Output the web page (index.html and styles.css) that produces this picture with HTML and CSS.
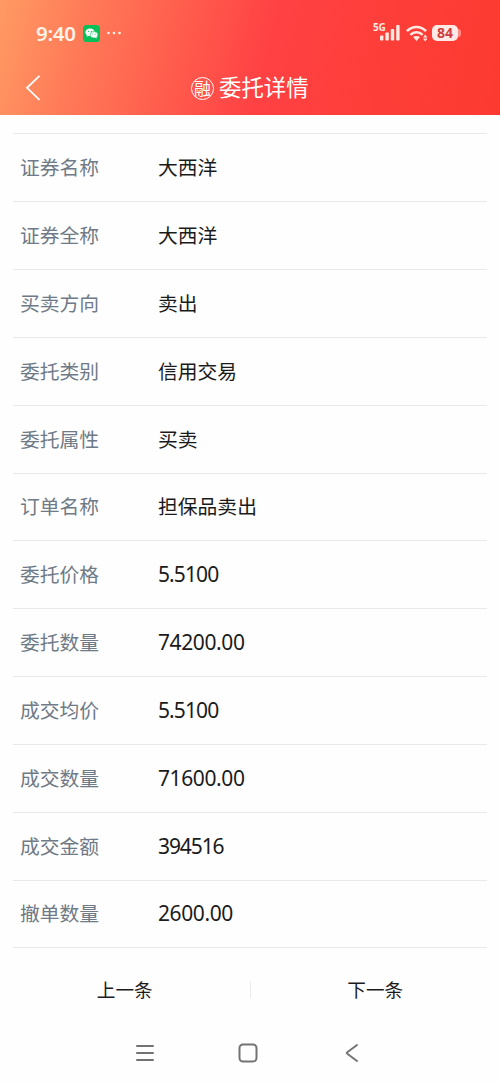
FILE: index.html
```html
<!DOCTYPE html>
<html lang="zh-CN">
<head>
    <meta charset="UTF-8">
    <meta name="viewport" content="width=device-width, initial-scale=1.0">
    <title>委托详情</title>
    <link rel="stylesheet" href="styles.css">
</head>
<body>
    <header class="header">
        <div class="status-bar">
            <div class="status-left">
                <span class="clock">9:40</span>
                <svg class="wechat-icon" viewBox="0 0 17 17">
                    <rect width="17" height="17" rx="3.5" fill="#07c05a"/>
                    <ellipse cx="7" cy="7.2" rx="4.6" ry="3.8" fill="#fff"/>
                    <path d="M4 9.5l-.5 2.2 2.5-1.2z" fill="#fff"/>
                    <ellipse cx="11" cy="9.8" rx="3.9" ry="3.3" fill="#fff" stroke="#07c05a" stroke-width=".6"/>
                    <path d="M12 12.5l1.7 1-.3-2z" fill="#fff"/>
                    <g fill="#07c05a">
                        <circle cx="5.6" cy="6.3" r=".6"/>
                        <circle cx="8.4" cy="6.3" r=".6"/>
                        <circle cx="9.8" cy="9" r=".5"/>
                        <circle cx="12.1" cy="9" r=".5"/>
                    </g>
                </svg>
                <svg class="more-icon" viewBox="0 0 14 4" fill="#fff3e8">
                    <circle cx="1.5" cy="2" r="1.3"/>
                    <circle cx="7" cy="2" r="1.3"/>
                    <circle cx="12.5" cy="2" r="1.3"/>
                </svg>
            </div>
            <div class="status-right">
                <div class="signal">
                    <span class="network">5G</span>
                    <svg class="bars-icon" viewBox="0 0 20 16" fill="#ffe9e2">
                        <rect x="0" y="10.5" width="3.4" height="5" rx=".8"/>
                        <rect x="5.4" y="7.5" width="3.4" height="8" rx=".8"/>
                        <rect x="10.8" y="4" width="3.4" height="11.5" rx=".8"/>
                        <rect x="16.2" y="0" width="3.4" height="15.5" rx=".8"/>
                    </svg>
                </div>
                <svg class="wifi-icon" viewBox="0 0 22 17" fill="none" stroke="#ffe9e2" stroke-width="2.5">
                    <path d="M.9 6.2C6.2.5 14.8.5 20.1 6.2"/>
                    <path d="M4.4 9.9c3.4-3.6 8.8-3.6 12.2 0"/>
                    <path d="M7 12.1c2.1-1.6 4.9-1.6 7 0l-3.5 3.8z" fill="#ffe9e2" stroke="none"/>
                    <path d="M17 12.6l2.2-3 2.2 3zM17 13.5h4.4l-2.2 3z" fill="#ffe9e2" stroke="none"/>
                </svg>
                <div class="battery">84</div>
            </div>
        </div>
        <div class="title-bar">
            <svg class="back-icon" viewBox="0 0 16 26" fill="none" stroke="#fff" stroke-width="1.8">
                <path d="M14.5 .8L2 12.8l12.5 12"/>
            </svg>
            <span class="badge">融</span>
            <h1 class="title">委托详情</h1>
        </div>
    </header>

    <main class="detail-list">
        <div class="row"><span class="label">证券名称</span><span class="value">大西洋</span></div>
        <div class="row"><span class="label">证券全称</span><span class="value">大西洋</span></div>
        <div class="row"><span class="label">买卖方向</span><span class="value">卖出</span></div>
        <div class="row"><span class="label">委托类别</span><span class="value">信用交易</span></div>
        <div class="row"><span class="label">委托属性</span><span class="value">买卖</span></div>
        <div class="row"><span class="label">订单名称</span><span class="value">担保品卖出</span></div>
        <div class="row"><span class="label">委托价格</span><span class="value number price">5.5100</span></div>
        <div class="row"><span class="label">委托数量</span><span class="value number">74200.00</span></div>
        <div class="row"><span class="label">成交均价</span><span class="value number price">5.5100</span></div>
        <div class="row"><span class="label">成交数量</span><span class="value number">71600.00</span></div>
        <div class="row"><span class="label">成交金额</span><span class="value number amount">394516</span></div>
        <div class="row"><span class="label">撤单数量</span><span class="value number">2600.00</span></div>
    </main>

    <div class="pager">
        <a class="pager-link">上一条</a>
        <a class="pager-link">下一条</a>
    </div>

    <nav class="system-nav">
        <svg class="nav-icon" viewBox="0 0 20 20" fill="none" stroke="#737373" stroke-width="2" stroke-linecap="round">
            <path d="M2 3h16M2 10h16M2 17h16"/>
        </svg>
        <svg class="nav-icon" viewBox="0 0 20 20" fill="none" stroke="#737373" stroke-width="2">
            <rect x="1.5" y="1.5" width="17" height="17" rx="3.5"/>
        </svg>
        <svg class="nav-icon" viewBox="0 0 20 20" fill="none" stroke="#737373" stroke-width="2" stroke-linecap="round" stroke-linejoin="round">
            <path d="M16 2L6.3 9.2q-1 .8 0 1.6L16 18"/>
        </svg>
    </nav>
</body>
</html>
```

FILE: styles.css
```css
* {
    box-sizing: border-box;
}
body {
    margin: 0;
    height: 1083px;
    background: #fefefe;
    color: #1b1b1b;
    font-family: "Noto Sans CJK SC", sans-serif;
    overflow: hidden;
}
.header {
    height: 115px;
    color: #fff;
    background: linear-gradient(104deg, #ff9a63 0%, #ff7a58 17%, #ff5c4d 36%, #ff4144 53%, #fd3e38 76%, #fc3a31 100%);
}
.status-bar {
    display: flex;
    justify-content: space-between;
    height: 60px;
    padding: 6px 39px 0 36px;
}
.status-left,
.status-right {
    display: flex;
    align-items: center;
}
.clock {
    width: 47px;
    font-family: "Noto Sans", sans-serif;
    font-size: 20.5px;
    font-weight: 600;
    letter-spacing: -0.3px;
    color: #fff3e8;
}
.wechat-icon {
    width: 17px;
    height: 17px;
}
.more-icon {
    width: 14px;
    height: 4px;
    margin-left: 7px;
}
.signal {
    position: relative;
    height: 16px;
    margin-right: 6px;
}
.network {
    position: absolute;
    left: -7px;
    top: -3px;
    font: 700 10px/11px "Noto Sans", sans-serif;
    letter-spacing: -0.3px;
    color: #ffe9e2;
}
.bars-icon {
    display: block;
    width: 20px;
    height: 16px;
}
.wifi-icon {
    width: 22px;
    height: 17px;
    margin-right: 4px;
}
.battery {
    position: relative;
    width: 26px;
    height: 16px;
    margin-right: 3px;
    border-radius: 5px;
    background: #ffe9e6;
    color: #cf3d3c;
    font: 700 14px/16px "Noto Sans", sans-serif;
    text-align: center;
}
.battery::after {
    content: "";
    position: absolute;
    left: 26px;
    top: 4px;
    width: 3px;
    height: 8px;
    border-radius: 0 4px 4px 0;
    background: #ff8c85;
}
.title-bar {
    display: flex;
    align-items: center;
    height: 55px;
    padding-left: 25px;
}
.back-icon {
    width: 16px;
    height: 26px;
}
.badge {
    width: 23px;
    height: 23px;
    margin: 1px 0 0 150px;
    border: 1px solid #fff;
    border-radius: 50%;
    font-size: 17px;
    line-height: 19px;
    text-align: center;
    white-space: nowrap;
}
.title {
    margin: 0 0 0 5px;
    padding-bottom: 3px;
    font-size: 22.4px;
    line-height: 32px;
    font-weight: 400;
}
.detail-list {
    margin: 18.4px 13px 0;
    border-top: 1px solid #e9e9e9;
}
.row {
    display: flex;
    align-items: center;
    height: 67.83px;
    padding: 0 0 2px 7px;
    border-bottom: 1px solid #e9e9e9;
    font-size: 19.8px;
}
.label {
    width: 138px;
    color: #6f7a86;
}
.number {
    padding-top: 1px;
    font-family: "Noto Sans", sans-serif;
    font-size: 21px;
    letter-spacing: -0.4px;
}
.price {
    letter-spacing: -0.9px;
}
.amount {
    letter-spacing: -1.1px;
}
.pager {
    display: flex;
    align-items: center;
    height: 83px;
    margin-bottom: 1px;
}
.pager-link {
    flex: 1;
    font-size: 18.6px;
    line-height: 15px;
    padding-bottom: 2px;
    text-align: center;
}
.pager-link + .pager-link {
    border-left: 1px solid #ececec;
}
.system-nav {
    display: flex;
    justify-content: space-between;
    padding: 11px 139px 0 135px;
}
.nav-icon {
    width: 20px;
    height: 20px;
}
```
